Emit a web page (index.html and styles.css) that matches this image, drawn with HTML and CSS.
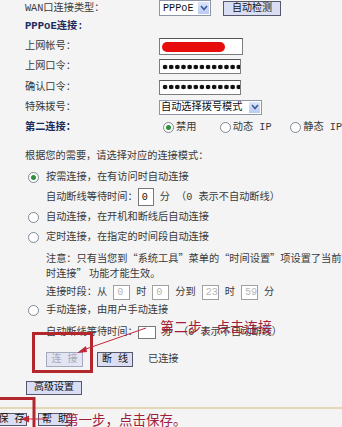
FILE: index.html
```html
<!DOCTYPE html>
<html lang="zh-CN">
    <head>
        <meta charset="utf-8">
        <title>WAN口设置</title>
        <meta name="viewport" content="width=device-width, initial-scale=1.0">
        <link rel="stylesheet" href="styles.css">
    </head>
    <body>
        <div class="page">
            <div class="form">
                <div class="row row-wan">
                    <span class="label">WAN口连接类型：</span>
                    <span class="select select-type">PPPoE<span class="drop"><svg width="8" height="6" viewBox="0 0 8 6"><polyline points="1,1 4,4.5 7,1" fill="none" stroke="#3f5a9c" stroke-width="1.6"/></svg></span></span>
                    <button class="btn btn-detect">自动检测</button>
                </div>
                <div class="row row-title">
                    <span class="title"><span class="latin">PPPoE</span>连接:</span>
                </div>
                <div class="row row-account">
                    <span class="label">上网帐号：</span>
                    <span class="input input-account"><span class="blot"></span></span>
                </div>
                <div class="row row-pass">
                    <span class="label">上网口令：</span>
                    <span class="input input-pass"><span class="dots"></span></span>
                </div>
                <div class="row row-confirm">
                    <span class="label">确认口令：</span>
                    <span class="input input-pass"><span class="dots"></span></span>
                </div>
                <div class="row row-dial">
                    <span class="label">特殊拨号：</span>
                    <span class="select select-dial">自动选择拨号模式<span class="drop"><svg width="8" height="6" viewBox="0 0 8 6"><polyline points="1,1 4,4.5 7,1" fill="none" stroke="#3f5a9c" stroke-width="1.6"/></svg></span></span>
                </div>
                <div class="row row-second">
                    <span class="label title">第二连接：</span>
                    <span class="opt opt-off"><span class="radio on"></span>禁用</span>
                    <span class="opt opt-dyn"><span class="radio"></span>动态 IP</span>
                    <span class="opt"><span class="radio"></span>静态 IP</span>
                </div>

                <div class="row row-hint">根据您的需要，请选择对应的连接模式：</div>

                <div class="row row-mode row-demand"><span class="radio on"></span>按需连接，在有访问时自动连接</div>
                <div class="row row-sub row-wait">
                    <span>自动断线等待时间：</span><span class="field field-wait">0</span><span class="after">分 （0 表示不自动断线）</span>
                </div>
                <div class="row row-mode row-auto"><span class="radio"></span>自动连接，在开机和断线后自动连接</div>
                <div class="row row-mode row-timed"><span class="radio"></span>定时连接，在指定的时间段自动连接</div>
                <div class="note">注意：只有当您到“系统工具”菜单的“时间设置”项设置了当前时间，“定<br>时连接” 功能才能生效。</div>
                <div class="row row-sub row-time">
                    <span>连接时段：从</span><span class="field field-time">0</span><span>时</span><span class="field field-time">0</span><span>分到</span><span class="field field-time">23</span><span>时</span><span class="field field-time">59</span><span>分</span>
                </div>
                <div class="row row-mode row-manual"><span class="radio"></span>手动连接，由用户手动连接</div>
                <div class="row row-sub row-wait2">
                    <span>自动断线等待时间：</span><span class="field field-wait2"></span><span class="after">分 （0 表示不自动断线）</span>
                </div>
                <div class="row row-sub row-actions">
                    <button class="btn btn-connect" disabled>连 接</button>
                    <button class="btn btn-hangup">断 线</button>
                    <span>已连接</span>
                </div>
                <div class="row row-advanced">
                    <button class="btn btn-advanced">高级设置</button>
                </div>
            </div>

            <div class="bar">
                <button class="btn btn-save">保 存</button>
                <button class="btn btn-help">帮 助</button>
            </div>

            <!-- red marks drawn over the screenshot -->
            <svg class="marks" width="342" height="427" viewBox="0 0 342 427">
                <rect x="33.5" y="333.5" width="58" height="38" fill="none" stroke="#b3262c" stroke-width="3"/>
                <polyline points="0,398.5 34,398.5 34,427" fill="none" stroke="#b3262c" stroke-width="3"/>
                <line x1="146" y1="328" x2="83" y2="350" stroke="#c2283a" stroke-width="1"/>
                <polygon points="77,353 86,346 87,352" fill="#c2283a"/>
                <line x1="48" y1="419" x2="27" y2="419" stroke="#c2283a" stroke-width="1"/>
                <polygon points="21,419 29,415.5 29,422.5" fill="#c2283a"/>
            </svg>
            <span class="callout callout-connect">第二步，点击连接</span>
            <span class="callout callout-save">第一步，点击保存。</span>
        </div>
    </body>
</html>
```

FILE: styles.css
```css
body {
    margin: 0;
    background-color: #f4f4f4;
    color: #3a3a3a;
    font-family: "Liberation Mono", "Noto Sans CJK SC", monospace;
    font-size: 10.2px;
    line-height: 15px;
    overflow: hidden;
}

.page {
    position: relative;
    width: 342px;
    height: 427px;
    overflow: hidden;
}

.form {
    padding-left: 25px;
}

.row {
    display: flex;
    align-items: center;
    white-space: nowrap;
}

.label {
    width: 134px;
    flex-shrink: 0;
}

.title {
    color: #1c2b5c;
    font-weight: bold;
}

.title .latin {
    font-size: 10.6px;
}

/* row heights, taken from the screenshot */
.row-wan { height: 16px; }
.row-title { height: 21px; }
.row-account { height: 19px; }
.row-pass { height: 21px; }
.row-confirm { height: 20px; }
.row-dial { height: 20px; }
.row-second { height: 20px; }
.row-hint { height: 20px; margin-top: 9px; }
.row-demand { height: 22px; }
.row-wait { height: 18px; }
.row-auto { height: 22px; }
.row-timed { height: 18px; }
.row-time { height: 16px; }
.row-manual { height: 20px; }
.row-wait2 { height: 24px; }
.row-actions { height: 31px; }
.row-advanced { height: 25px; }

.row-sub {
    padding-left: 21px;
}

.btn {
    display: inline-flex;
    align-items: center;
    justify-content: center;
    padding: 0;
    margin: 0;
    font: inherit;
    font-size: 10px;
    color: #111;
    background-color: #dadef5;
    border: 1px solid #55586a;
    border-radius: 0;
    box-sizing: border-box;
    white-space: nowrap;
}

.btn-detect {
    width: 58px;
    height: 15px;
    margin-left: 12px;
}

.btn-connect {
    width: 37px;
    height: 15px;
    color: #a8a8b8;
    background-color: #e4e5f2;
    border-color: #a6a8c0;
    margin-right: 14px;
}

.btn-hangup {
    width: 36px;
    height: 15px;
    margin-right: 15px;
}

.btn-advanced {
    width: 56px;
    height: 14px;
    margin-left: 1px;
}

.select {
    position: relative;
    display: flex;
    align-items: center;
    box-sizing: border-box;
    background-color: #fff;
    border: 1px solid #8e95a6;
    padding-left: 3px;
    color: #111;
}

.select-type {
    width: 52px;
    height: 16px;
}

.select-dial {
    width: 103px;
    height: 15px;
    padding-left: 1px;
}

.drop {
    margin-left: auto;
    width: 13px;
    height: 100%;
    box-sizing: border-box;
    border: 1px solid #fff;
    background: linear-gradient(#dbe5fb, #b9cbf3);
    display: flex;
    align-items: center;
    justify-content: center;
}

.input {
    display: flex;
    align-items: center;
    box-sizing: border-box;
    background-color: #fff;
    border: 1px solid #7d7d7d;
    border-top-color: #555;
}

.input-account {
    width: 84px;
    height: 17px;
    padding-left: 2px;
}

.input-pass {
    width: 82px;
    height: 15px;
    padding-left: 2px;
}

.blot {
    width: 63px;
    height: 10px;
    border-radius: 5px;
    background-color: #e80d0d;
}

.dots {
    width: 80px;
    height: 6px;
    background: radial-gradient(circle, #111 2.1px, transparent 2.6px) 0 center / 6.15px 6px repeat-x;
}

.radio {
    width: 11px;
    height: 11px;
    box-sizing: border-box;
    border: 1px solid #7f8894;
    border-radius: 50%;
    background-color: #fff;
    flex-shrink: 0;
    display: flex;
    align-items: center;
    justify-content: center;
}

.radio.on::after {
    content: "";
    width: 5px;
    height: 5px;
    border-radius: 50%;
    background-color: #2f8f3c;
}

.row-second .label {
    width: 138px;
}

.opt {
    display: flex;
    align-items: center;
}

.opt .radio {
    margin-right: 2px;
}

.opt-off {
    width: 58px;
}

.opt-dyn {
    width: 72px;
}

.row-mode .radio {
    margin-left: 3px;
    margin-right: 7px;
}

.field {
    display: flex;
    align-items: center;
    box-sizing: border-box;
    background-color: #fff;
    border: 1px solid #777;
    padding-left: 3px;
    color: #111;
}

.field-wait {
    width: 16px;
    height: 18px;
}

.field-wait2 {
    width: 18px;
    height: 13px;
}

.after {
    margin-left: 6px;
}

.field-time {
    width: 17px;
    height: 15px;
    margin: 0 6px;
    color: #b5b5b5;
    border-color: #a0a0a0;
}

.note {
    padding: 4px 0 4px 21px;
    font-family: "Noto Sans CJK SC", sans-serif;
    white-space: nowrap;
}

.bar {
    display: flex;
    align-items: center;
    height: 20px;
    margin-top: 7px;
    border-top: 2px solid #e4d6b8;
}

.btn-save {
    width: 31px;
    height: 13px;
    margin-left: -4px;
}

.btn-help {
    width: 34px;
    height: 13px;
    margin-left: 11px;
}

.marks {
    position: absolute;
    top: 0;
    left: 0;
    pointer-events: none;
}

.callout {
    position: absolute;
    font-family: "Noto Sans CJK SC", sans-serif;
    color: #a11d3d;
    white-space: nowrap;
    line-height: 16px;
}

.callout-connect {
    left: 160px;
    top: 318px;
    font-size: 14px;
}

.callout-save {
    left: 65px;
    top: 411px;
    font-size: 13.5px;
}
```
